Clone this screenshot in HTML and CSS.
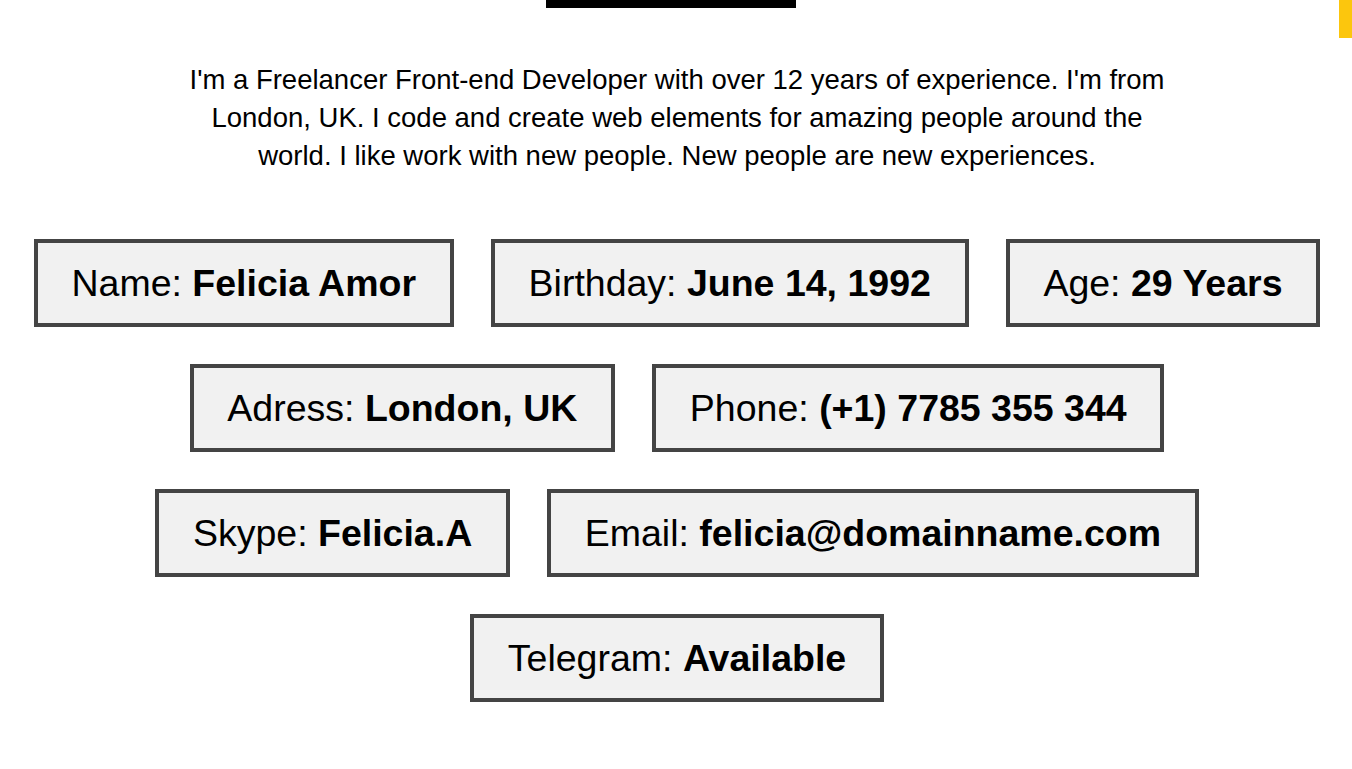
FILE: index.html
```html
<!DOCTYPE html>
<html lang="en">
<head>
<meta charset="utf-8">
<title>About</title>
<link rel="stylesheet" href="styles.css">
</head>
<body>
<div class="page">
  <div class="title-bar"></div>
  <p class="intro">I'm a Freelancer Front-end Developer with over 12 years of experience. I'm from London, UK. I code and create web elements for amazing people around the world. I like work with new people. New people are new experiences.</p>
  <ul class="facts">
    <li class="fact">Name: <b>Felicia Amor</b></li>
    <li class="fact">Birthday: <b>June 14, 1992</b></li>
    <li class="fact">Age: <b>29 Years</b></li>
    <li class="fact">Adress: <b>London, UK</b></li>
    <li class="fact">Phone: <b>(+1) 7785 355 344</b></li>
    <li class="fact">Skype: <b>Felicia.A</b></li>
    <li class="fact">Email: <b>felicia@domainname.com</b></li>
    <li class="fact">Telegram: <b>Available</b></li>
  </ul>
</div>
<div class="to-top"></div>
</body>
</html>
```
FILE: styles.css
```css
html, body {
  margin: 0;
  padding: 0;
  background: #fff;
  color: #000;
  font-family: "Liberation Sans", Arial, sans-serif;
}

.page {
  width: 1352px;
  height: 769px;
  overflow: hidden;
}

.title-bar {
  width: 250px;
  height: 8px;
  background: #000;
  margin-left: 546px;
}

.intro {
  width: 1000px;
  margin: 53px auto 0;
  padding-left: 2px;
  font-size: 27.5px;
  line-height: 38px;
  text-align: center;
}

.facts {
  list-style: none;
  margin: 64px 0 0;
  padding: 0 19px 0 21px;
  display: flex;
  flex-wrap: wrap;
  justify-content: center;
  column-gap: 37px;
  row-gap: 37px;
}

.fact {
  font-size: 37.5px;
  line-height: 43px;
  padding: 18.5px 33.75px;
  background: #f1f1f1;
  border: 4px solid #444;
  white-space: nowrap;
}

.fact b {
  font-weight: 700;
}

.to-top {
  position: fixed;
  top: 0;
  right: 0;
  width: 13px;
  height: 38px;
  background: #fcc60d;
}
```
